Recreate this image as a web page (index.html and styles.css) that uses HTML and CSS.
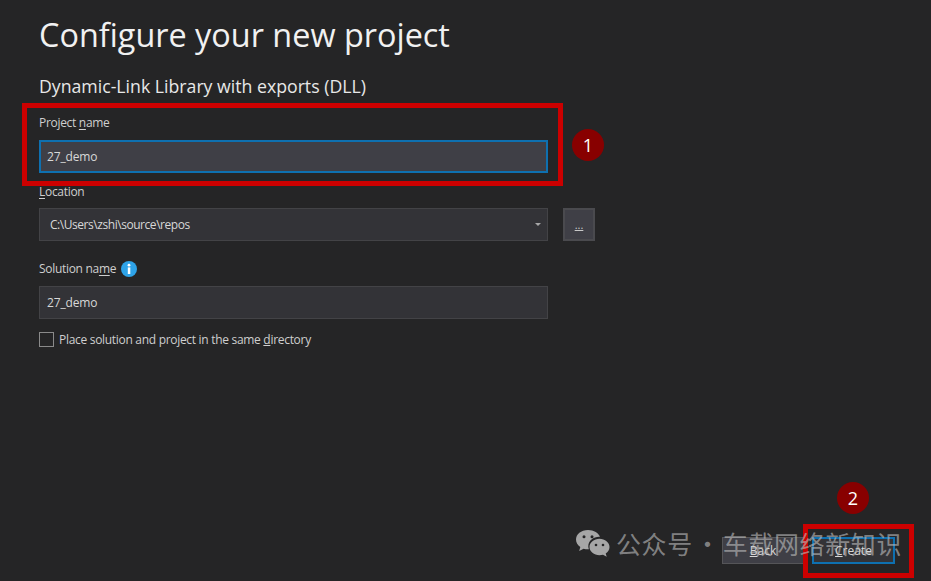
FILE: index.html
```html
<!DOCTYPE html>
<html lang="en">

<head>
    <meta charset="UTF-8">
    <title>Configure your new project</title>
    <link rel="stylesheet" href="styles.css">
</head>

<body>
    <div class="page">
        <h1>Configure your new project</h1>
        <h2>Dynamic-Link Library with exports (DLL)</h2>

        <div class="field-label first"><span>Project <u>n</u>ame</span></div>
        <div class="text-box focused">27_demo</div>

        <div class="field-label location"><span><u>L</u>ocation</span></div>
        <div class="location-row">
            <div class="text-box select">
                <span>C:\Users\zshi\source\repos</span>
                <span class="caret"></span>
            </div>
            <div class="browse"><u>...</u></div>
        </div>

        <div class="field-label solution">
            <span>Solution na<u>m</u>e</span>
            <svg class="info" width="16" height="16" viewBox="0 0 16 16">
                <circle cx="8" cy="8" r="8" fill="#2ea3e8" />
                <circle cx="8" cy="4.2" r="1.4" fill="#fff" />
                <rect x="6.800" y="6.400" width="2.500" height="6.600" fill="#fff" />
            </svg>
        </div>
        <div class="text-box">27_demo</div>

        <div class="check-row">
            <span class="check"></span>
            <span>Place solution and project in the same <u>d</u>irectory</span>
        </div>

        <div class="buttons">
            <div class="btn"><u>B</u>ack</div>
            <div class="btn primary"><u>C</u>reate</div>
        </div>
    </div>

    <!-- marcas por cima do print -->
    <div class="mark mark-one"></div>
    <div class="mark mark-two"></div>
    <div class="badge badge-one">1</div>
    <div class="badge badge-two">2</div>

    <div class="watermark">
        <svg width="36" height="28" viewBox="0 0 36 28">
            <path fill="#a6a6a6" d="M13 1C6 1 1 5.300 1 10.600c0 3 1.700 5.700 4.300 7.500L4.200 22l4.400-2.300c1.300.4 2.800.6 4.400.6h.9c-.4-1-.6-2-.6-3.100 0-5.300 5-9.400 11-9.400h.7C23.700 4.200 18.900 1 13 1z" />
            <path fill="#a6a6a6" d="M24.500 9.800c-5.500 0-10 3.700-10 8.200s4.500 8.200 10 8.200c1.200 0 2.400-.2 3.500-.5l3.700 2-1-3.200c2.300-1.500 3.800-3.900 3.800-6.500 0-4.500-4.500-8.200-10-8.200z" />
            <circle cx="9" cy="7.800" r="1.500" fill="#252526" />
            <circle cx="17" cy="7.800" r="1.500" fill="#252526" />
            <circle cx="21" cy="16" r="1.300" fill="#252526" />
            <circle cx="28" cy="16" r="1.300" fill="#252526" />
        </svg>
        <span>公众号 · 车载网络新知识</span>
    </div>
</body>

</html>
```

FILE: styles.css
```css
body {
    margin: 0;
    background-color: #252526;
    color: #d8d8d8;
    font-family: "Open Sans", "Noto Sans", sans-serif;
    overflow: hidden;
}

.page {
    position: relative;
    width: 931px;
    height: 581px;
    box-sizing: border-box;
    padding: 14px 0 0 39px;
    display: flex;
    flex-direction: column;
    align-items: flex-start;
}

h1 {
    margin: 0;
    font-size: 32.4px;
    line-height: 40px;
    font-weight: 400;
    color: #f1f1f1;
}

h2 {
    margin: 20px 0 0;
    font-size: 17.7px;
    line-height: 24px;
    font-weight: 400;
    color: #e8e8e8;
}

.field-label {
    display: flex;
    align-items: center;
    gap: 5px;
    height: 16px;
    font-size: 12px;
    line-height: 16px;
    letter-spacing: -0.3px;
    color: #cfcfcf;
}

.field-label u {
    text-underline-offset: 2px;
}

.first {
    margin-top: 17px;
}

.location {
    margin-top: 11px;
}

.solution {
    margin-top: 20px;
}

.text-box {
    width: 509px;
    height: 33px;
    box-sizing: border-box;
    margin-top: 9px;
    padding: 0 7px;
    display: flex;
    align-items: center;
    justify-content: space-between;
    background-color: #333337;
    border: 1px solid #434346;
    font-size: 12px;
    letter-spacing: -0.15px;
    color: #d8d8d8;
}

.focused {
    margin-top: 9px;
    padding: 0 6px;
    background-color: #3f3f46;
    border: 2px solid #0e70b0;
}

.location-row {
    display: flex;
    gap: 15px;
    margin-top: 8px;
}

.location-row .text-box {
    margin-top: 0;
    letter-spacing: -0.45px;
}

.select {
    padding: 0 6px 0 10px;
}

.caret {
    width: 0;
    height: 0;
    border-left: 3px solid transparent;
    border-right: 3px solid transparent;
    border-top: 3px solid #a8a8a8;
}

.browse {
    width: 32px;
    height: 33px;
    box-sizing: border-box;
    background-color: #3f3f46;
    border: 2px solid #4a4a4e;
    font-size: 11px;
    line-height: 29px;
    text-align: center;
    color: #c8c8c8;
}

.check-row {
    display: flex;
    align-items: center;
    gap: 5px;
    margin-top: 12px;
    font-size: 12px;
    letter-spacing: -0.3px;
    color: #cfcfcf;
}

.check {
    width: 15px;
    height: 15px;
    box-sizing: border-box;
    border: 1px solid #8a8a8a;
    background-color: #252526;
}

.buttons {
    display: flex;
    gap: 8px;
    margin: 189px 0 0 683px;
}

.btn {
    width: 82px;
    height: 27px;
    box-sizing: border-box;
    background-color: #3f3f46;
    border: 1px solid #555558;
    font-size: 12px;
    line-height: 25px;
    text-align: center;
    color: #d8d8d8;
}

.primary {
    width: 83px;
    background-color: #333337;
    border: 2px solid #0e70b0;
    line-height: 23px;
}

.mark {
    position: absolute;
    box-sizing: border-box;
    border: 5px solid #cc0000;
}

.mark-one {
    left: 22px;
    top: 103px;
    width: 541px;
    height: 83px;
}

.mark-two {
    left: 803px;
    top: 524px;
    width: 111px;
    height: 54px;
}

.badge {
    position: absolute;
    width: 32px;
    height: 32px;
    border-radius: 50%;
    background-color: #880000;
    color: #fff;
    font-size: 18px;
    line-height: 32px;
    text-align: center;
}

.badge-one {
    left: 572px;
    top: 129px;
}

.badge-two {
    left: 837px;
    top: 482px;
}

.watermark {
    position: absolute;
    left: 575px;
    top: 527px;
    display: flex;
    align-items: center;
    gap: 5px;
    font-family: "Noto Sans CJK SC", sans-serif;
    font-size: 25px;
    line-height: 32px;
    letter-spacing: 0.6px;
    word-spacing: -4px;
    color: rgba(190, 190, 190, 0.62);
    white-space: nowrap;
}
```
